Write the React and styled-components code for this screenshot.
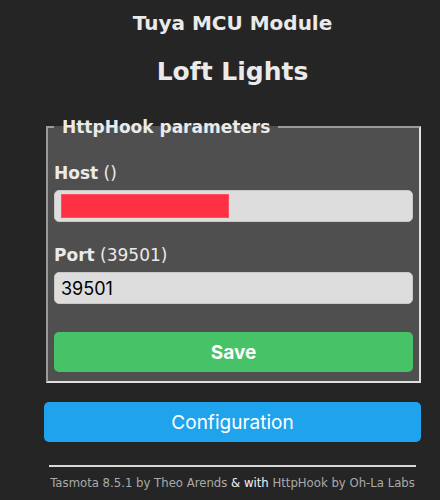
import styled, { createGlobalStyle } from 'styled-components';

const GlobalStyle = createGlobalStyle`
  html, body {
    margin: 0;
    padding: 0;
    background: #252525;
  }
  body {
    font-family: "DejaVu Sans", Verdana, sans-serif;
    color: #eaeaea;
  }
`;

const Page = styled.div`
  width: 440px;
  height: 500px;
  box-sizing: border-box;
  padding: 9px 19px 0 44px;
  overflow: hidden;
`;

const Header = styled.div`
  text-align: center;
`;

const Module = styled.h3`
  margin: 0;
  font-size: 20px;
  font-weight: bold;
  line-height: 28px;
`;

const DeviceName = styled.h2`
  margin: 20px 0 0;
  font-size: 25px;
  font-weight: bold;
  line-height: 30px;
`;

const Fieldset = styled.fieldset`
  margin: 30px 0 0 2px;
  padding: 6px 6px 9px 6px;
  background: #4f4f4f;
  border-width: 2px;
  border-style: solid;
  border-color: #9a9a9a #e0e0e0 #e0e0e0 #9a9a9a;
`;

const Legend = styled.legend`
  font-size: 17px;
  font-weight: bold;
  padding: 0 8px;
  margin-left: 0;
`;

const Label = styled.label`
  display: block;
  font-size: 17px;
  line-height: 22px;
  margin-top: ${(p) => p.$top}px;
  margin-bottom: 6px;
`;

const Hint = styled.span`
  font-weight: normal;
`;

const Input = styled.div`
  height: 32px;
  box-sizing: border-box;
  background: #dddddd;
  border-radius: 5px;
  border: 1px solid #c8c8c8;
  display: flex;
  align-items: center;
  padding: 0 6px;
  font-family: "Inter", "Liberation Sans", sans-serif;
  font-size: 18px;
  color: #000;
`;

const Redacted = styled.div`
  width: 168px;
  height: 24px;
  background: #fe3044;
  border: 1px solid #ff5060;
  box-sizing: border-box;
`;

const Button = styled.button`
  display: block;
  width: 100%;
  height: 40px;
  border: 0;
  border-radius: 5px;
  background: ${(p) => p.$bg};
  color: #fff;
  font-family: "Inter", "Liberation Sans", sans-serif;
  font-size: ${(p) => p.$size}px;
  font-weight: ${(p) => p.$weight};
  cursor: pointer;
`;

const SaveButton = styled(Button)`
  margin-top: 28px;
`;

const ConfigButton = styled(Button)`
  margin-top: 19px;
  width: 377px;
`;

const Footer = styled.div`
  margin: 23px 0 0 5px;
  width: 367px;
`;

const Rule = styled.hr`
  margin: 0;
  border: 0;
  height: 2px;
  background: #d8d8d8;
`;

const FooterText = styled.div`
  margin-top: 9px;
  font-size: 11.7px;
  color: #aaaaaa;
  white-space: nowrap;
  text-align: center;
`;

const Strong = styled.span`
  color: #f2f2f2;
`;

export default function App() {
  return (
    <>
      <GlobalStyle />
      <Page>
        <Header>
          <Module>Tuya MCU Module</Module>
          <DeviceName>Loft Lights</DeviceName>
        </Header>
        <Fieldset>
          <Legend>HttpHook parameters</Legend>
          <Label $top={19}>
            <b>Host</b> <Hint>()</Hint>
          </Label>
          <Input>
            <Redacted />
          </Input>
          <Label $top={22}>
            <b>Port</b> <Hint>(39501)</Hint>
          </Label>
          <Input>39501</Input>
          <SaveButton $bg="#47c266" $size={19} $weight={700}>
            Save
          </SaveButton>
        </Fieldset>
        <ConfigButton $bg="#1fa3ec" $size={19} $weight={400}>
          Configuration
        </ConfigButton>
        <Footer>
          <Rule />
          <FooterText>
            Tasmota 8.5.1 by Theo Arends <Strong>&amp; with</Strong> HttpHook by
            Oh-La Labs
          </FooterText>
        </Footer>
      </Page>
    </>
  );
}
